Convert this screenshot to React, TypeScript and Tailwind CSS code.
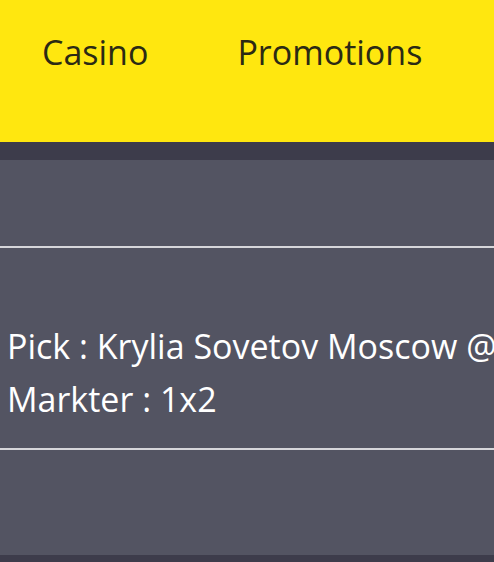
export default function App() {
    return (
        <div className="min-h-[562px] bg-[#3d3c4b] font-['Open_Sans',sans-serif] text-[34px] leading-[53px]">
            <header className="h-[142px] bg-[#ffe70f] text-[#2b2a14] pt-[26px]">
                <nav className="flex gap-[89px] pl-[42px]">
                    <a>Casino</a>
                    <a>Promotions</a>
                </nav>
            </header>
            <div className="h-[18px]" />
            <main className="bg-[#535462] text-white">
                <div className="h-[88px] border-b-2 border-[#d6d6da]" />
                <div className="pt-[72px] pb-[22px] pl-[7px] whitespace-nowrap overflow-hidden border-b-2 border-[#d6d6da]">
                    <p>Pick : Krylia Sovetov Moscow @ 2.10</p>
                    <p>Markter : 1x2</p>
                </div>
                <div className="h-[105px]" />
            </main>
        </div>
    );
}
